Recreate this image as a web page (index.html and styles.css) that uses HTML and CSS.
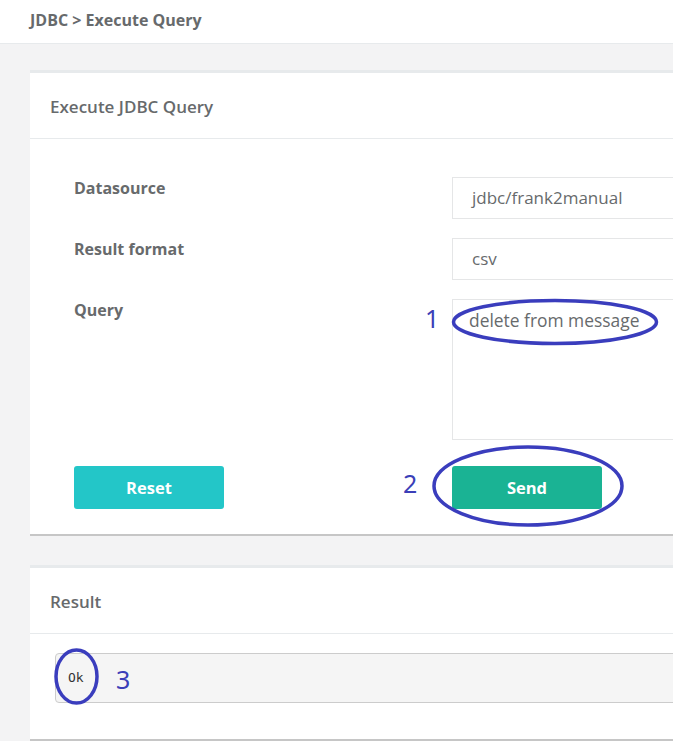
FILE: index.html
```html
<!DOCTYPE html>
<html lang="en">
<head>
<meta charset="utf-8">
<title>JDBC - Execute Query</title>
<link rel="stylesheet" href="styles.css">
</head>
<body>
<header class="topbar">
  <span class="crumb">JDBC &gt; Execute Query</span>
</header>
<main class="content">
  <section class="card card-query">
    <div class="card-title"><h5>Execute JDBC Query</h5></div>
    <div class="card-body form-grid">
      <label class="label">Datasource</label>
      <div class="field"><div class="input">jdbc/frank2manual</div></div>
      <label class="label">Result format</label>
      <div class="field"><div class="input">csv</div></div>
      <label class="label">Query</label>
      <div class="field"><div class="textarea">delete from message</div></div>
      <div class="btn-cell"><button class="btn btn-reset">Reset</button></div>
      <div class="btn-cell"><button class="btn btn-send">Send</button></div>
    </div>
  </section>
  <section class="card card-result">
    <div class="card-title"><h5>Result</h5></div>
    <div class="card-body result-body">
      <pre class="result">Ok</pre>
    </div>
  </section>
</main>
<svg class="annotations" width="673" height="741" viewBox="0 0 673 741" aria-hidden="true">
  <ellipse cx="555" cy="322" rx="101.5" ry="21.5" />
  <ellipse cx="528" cy="486" rx="94" ry="39" />
  <ellipse cx="76.5" cy="676.5" rx="20.5" ry="26.5" />
  <text x="425" y="328">1</text>
  <text x="403" y="493">2</text>
  <text x="116" y="689">3</text>
</svg>
</body>
</html>
```

FILE: styles.css
```css
html, body {
  margin: 0;
  padding: 0;
}
body {
  background: #f3f3f4;
  font-family: "Open Sans", "Noto Sans", sans-serif;
  color: #676a6c;
  overflow: hidden;
  width: 673px;
  height: 741px;
  position: relative;
}
.topbar {
  height: 43px;
  background: #ffffff;
  border-bottom: 1px solid #e7eaec;
  padding-left: 30px;
  line-height: 41px;
}
.crumb {
  font-size: 16px;
  font-weight: 700;
  color: #676a6c;
}
.content {
  padding: 26px 0 0 30px;
  width: 1000px;
}
.card {
  background: #ffffff;
  border-top: 3px solid #e7eaec;
  border-bottom: 2px solid #c6c6c6;
}
.card-query {
  margin-bottom: 29px;
}
.card-title {
  border-bottom: 1px solid #e7eaec;
  padding: 23px 20px 20px;
}
.card-title h5 {
  margin: 0;
  font-size: 17px;
  font-weight: 600;
  line-height: 22px;
  color: #676a6c;
}
.form-grid {
  display: grid;
  grid-template-columns: 378px 1fr;
  row-gap: 19px;
  padding: 38px 0 25px 44px;
}
.label {
  font-size: 16px;
  font-weight: 700;
  line-height: 22px;
  padding-top: 0;
  color: #676a6c;
}
.input,
.textarea {
  border: 1px solid #e5e6e7;
  font-size: 17px;
  color: #676a6c;
  padding: 0 19px;
}
.input {
  height: 40px;
  line-height: 40px;
}
.textarea {
  height: 131px;
  padding: 8px 16px 0;
  line-height: 24px;
  font-size: 17.4px;
}
.btn-cell {
  margin-top: 7px;
}
.btn {
  width: 150px;
  height: 43px;
  border: 0;
  border-radius: 3px;
  color: #ffffff;
  font-family: "Open Sans", "Noto Sans", sans-serif;
  font-size: 16.5px;
  font-weight: 700;
  padding: 0;
}
.btn-reset {
  background: #23c6c8;
}
.btn-send {
  background: #1ab394;
}
.result-body {
  padding: 19px 0 36px 25px;
}
.result {
  margin: 0;
  height: 48px;
  box-sizing: content-box;
  background: #f5f5f5;
  border: 1px solid #cccccc;
  border-radius: 4px;
  padding: 0 12px;
  font-family: "DejaVu Sans Mono", "Liberation Mono", monospace;
  font-size: 13px;
  line-height: 48px;
  color: #333333;
}
.annotations {
  position: absolute;
  left: 0;
  top: 0;
  pointer-events: none;
}
.annotations ellipse {
  fill: none;
  stroke: #3a3dbd;
  stroke-width: 3.5;
}
.annotations text {
  font-family: "Noto Sans", "Open Sans", sans-serif;
  font-size: 25px;
  fill: #3b3fb8;
}
```
